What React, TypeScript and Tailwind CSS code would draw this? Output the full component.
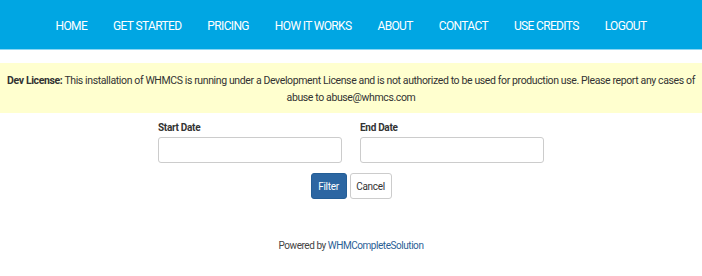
const navItems = ['HOME', 'GET STARTED', 'PRICING', 'HOW IT WORKS', 'ABOUT', 'CONTACT', 'USE CREDITS', 'LOGOUT'];

export default function App() {
  return (
    <div className="min-h-[276px] bg-white font-['Roboto',sans-serif] text-[#333]">
      <nav className="h-[50px] bg-[#00a6e3] border-b border-[#8ad6f3]">
        <ul className="flex h-full items-center justify-center gap-[26px] pt-[3px]">
          {navItems.map((item) => (
            <li key={item} className="text-[12px] leading-none text-white tracking-[-0.65px]">
              {item}
            </li>
          ))}
        </ul>
      </nav>

      <div className="mt-[13px] bg-[#ffffcf] px-[4px] pt-[9px] pb-[7px] text-center text-[10.5px] leading-[17px] tracking-[-0.38px] text-[#333]">
        <strong className="font-bold">Dev License:</strong> This installation of WHMCS is running under a Development License and is not authorized to be used for production use. Please report any cases of abuse to abuse@whmcs.com
      </div>

      <form className="mx-auto mt-[8px] w-[386px]">
        <div className="flex gap-[18px]">
          <div className="w-[184px]">
            <label className="block text-[10px] font-bold leading-[14px] tracking-[-0.3px] text-[#333] mb-[2px]">
              Start Date
            </label>
            <input type="text" className="h-[26px] w-full rounded-[3px] border border-[#ccc] bg-white" />
          </div>
          <div className="w-[184px]">
            <label className="block text-[10px] font-bold leading-[14px] tracking-[-0.3px] text-[#333] mb-[2px]">
              End Date
            </label>
            <input type="text" className="h-[26px] w-full rounded-[3px] border border-[#ccc] bg-white" />
          </div>
        </div>
        <div className="mt-[10px] flex justify-center gap-[3px]">
          <button type="button" className="h-[26px] w-[36px] rounded-[3px] border border-[#245e96] bg-[#2c66a2] text-[10px] tracking-[-0.3px] text-white">
            Filter
          </button>
          <button type="button" className="h-[26px] w-[42px] rounded-[3px] border border-[#ccc] bg-white text-[10px] tracking-[-0.3px] text-[#333]">
            Cancel
          </button>
        </div>
      </form>

      <p className="mt-[39px] text-center text-[10px] tracking-[-0.45px] text-[#444]">
        Powered by <a className="text-[#2b5f96]">WHMCompleteSolution</a>
      </p>
    </div>
  );
}
